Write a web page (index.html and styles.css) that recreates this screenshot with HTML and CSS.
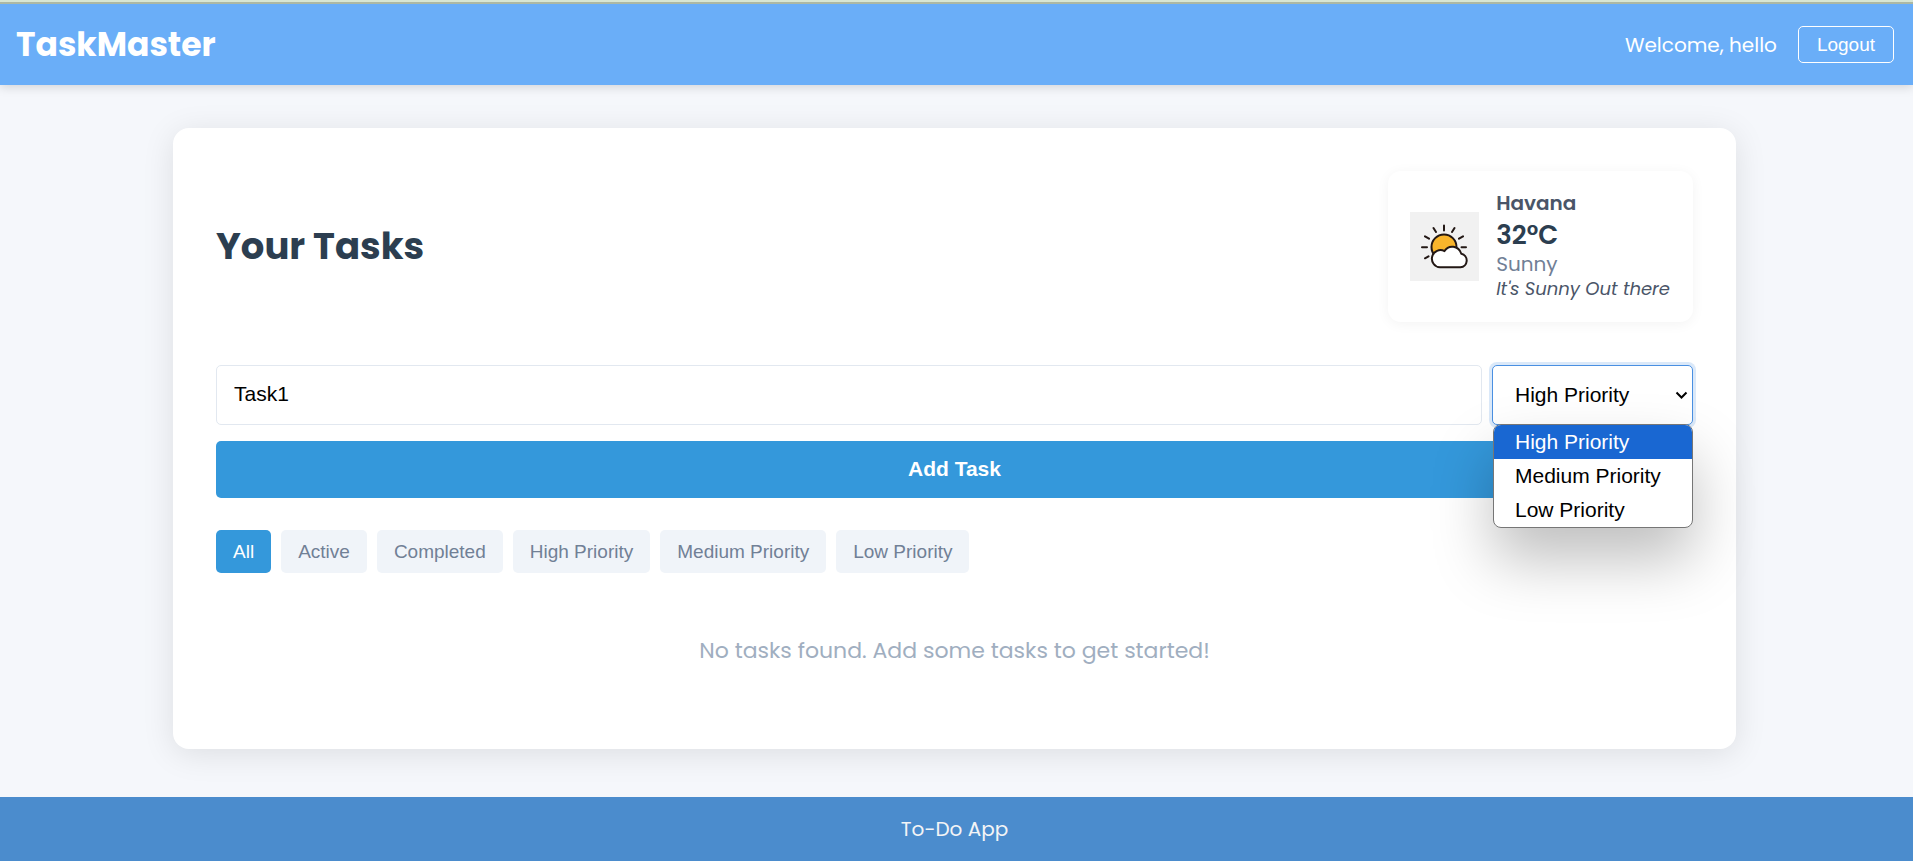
FILE: index.html
```html
<!DOCTYPE html>
<html lang="en">
<head>
<meta charset="utf-8">
<title>TaskMaster</title>
<meta name="viewport" content="width=device-width, initial-scale=1">
<link rel="stylesheet" href="styles.css">
</head>
<body>
<header class="navbar">
  <div class="brand">TaskMaster</div>
  <div class="user">
    <span class="welcome">Welcome, hello</span>
    <button class="logout" type="button">Logout</button>
  </div>
</header>

<main class="main">
  <section class="card">
    <div class="card-head">
      <h1 class="title">Your Tasks</h1>
      <div class="weather">
        <svg class="weather-icon" viewBox="0 0 69 69" role="img" aria-label="Partly sunny">
          <rect width="69" height="69" fill="#f1f1f1"/>
          <g stroke="#231815" stroke-width="2" stroke-linecap="round" stroke-linejoin="round">
            <path fill="none" d="M34 13.500v5M23.500 16l2.500 4M44.500 16l-2.500 4M15 24.300l4 2.400M53 24.300l-4 2.400M12 35.300h5M51.500 35.300h4.500M15 46.300l3.500-2"/>
            <circle cx="34" cy="35" r="12.500" fill="#f9b52c"/>
            <path fill="#fff" d="M30 55.300a8.600 8.600 0 1 1 4.500-16.200c4-6.600 14-5.800 16.800 2.600a6.900 6.900 0 0 1-.8 13.600z"/>
          </g>
        </svg>
        <div class="weather-info">
          <div class="city">Havana</div>
          <div class="temp">32°C</div>
          <div class="condition">Sunny</div>
          <div class="note">It's Sunny Out there</div>
        </div>
      </div>
    </div>

    <form class="task-form">
      <input class="task-input" type="text" aria-label="Task" value="Task1">
      <div class="priority">
        <select class="priority-select" aria-label="Priority">
          <option selected>High Priority</option>
          <option>Medium Priority</option>
          <option>Low Priority</option>
        </select>
        <svg class="chevron" viewBox="0 0 13 9" aria-hidden="true"><path d="M1.500 1.500l5 5 5-5" fill="none" stroke="#000" stroke-width="2"/></svg>
        <ul class="priority-menu" role="listbox" aria-label="Priority options">
          <li class="option option-active" role="option" aria-selected="true">High Priority</li>
          <li class="option" role="option" aria-selected="false">Medium Priority</li>
          <li class="option" role="option" aria-selected="false">Low Priority</li>
        </ul>
      </div>
      <button class="add-task" type="button">Add Task</button>
    </form>

    <div class="filters">
      <button class="filter filter-active" type="button">All</button>
      <button class="filter" type="button">Active</button>
      <button class="filter" type="button">Completed</button>
      <button class="filter" type="button">High Priority</button>
      <button class="filter" type="button">Medium Priority</button>
      <button class="filter" type="button">Low Priority</button>
    </div>

    <p class="empty">No tasks found. Add some tasks to get started!</p>
  </section>
</main>

<footer class="footer">To-Do App</footer>
</body>
</html>
```
FILE: styles.css
```css
* {
  box-sizing: border-box;
  margin: 0;
  padding: 0;
}

body {
  display: flex;
  flex-direction: column;
  min-height: 100vh;
  border-top: 2px solid #d8e6d3;
  background: #f5f7fb;
  color: #2c3e50;
  font-family: Poppins, Inter, sans-serif;
}

button,
input,
select,
.priority-menu {
  font-family: Arial, "Liberation Sans", sans-serif;
}

.navbar {
  display: flex;
  align-items: center;
  justify-content: space-between;
  height: 83px;
  padding: 0 19px 0 16px;
  border-top: 2px solid #acb8a4;
  background: #6aaef8;
  box-shadow: 0 2px 10px rgba(0, 0, 0, 0.15);
  color: #fff;
}

.brand {
  font-size: 33px;
  font-weight: 700;
}

.user {
  display: flex;
  align-items: center;
  gap: 21px;
}

.welcome {
  font-size: 20px;
}

.logout {
  padding: 6px 18px;
  border: 1px solid #fff;
  border-radius: 5px;
  background: transparent;
  color: #fff;
  font-size: 19px;
  line-height: 23px;
}

.main {
  flex: 1;
  padding: 43px 21px 48px 17px;
}

.card {
  max-width: 1563px;
  margin: 0 auto;
  padding: 43px;
  border-radius: 16px;
  background: #fff;
  box-shadow: 0 5px 32px rgba(0, 0, 0, 0.1);
}

.card-head {
  display: flex;
  align-items: center;
  justify-content: space-between;
  margin-bottom: 43px;
}

.title {
  padding-bottom: 2px;
  font-size: 37px;
  font-weight: 700;
}

.weather {
  display: flex;
  align-items: center;
  gap: 17px;
  padding: 21px 23px 21px 22px;
  border-radius: 13px;
  box-shadow: 0 2px 13px rgba(0, 0, 0, 0.05);
}

.weather-icon {
  width: 69px;
  height: 69px;
}

.city {
  margin-bottom: 2px;
  color: #4a5568;
  font-size: 20px;
  font-weight: 600;
  line-height: 22px;
}

.temp {
  font-size: 26px;
  font-weight: 600;
  line-height: 38px;
}

.condition {
  color: #718096;
  font-size: 20px;
  line-height: 20px;
}

.note {
  margin-top: 3px;
  color: #4a5568;
  font-size: 18px;
  font-style: italic;
  line-height: 24px;
}

.task-form {
  display: grid;
  grid-template-columns: 1fr auto;
  gap: 16px 10px;
  margin-bottom: 32px;
}

.task-input,
.priority-select {
  width: 100%;
  height: 60px;
  border: 1px solid #e2e8f0;
  border-radius: 5px;
  background: #fff;
  color: #000;
  font-size: 21px;
}

.task-input {
  padding: 0 17px 2px;
}

.priority {
  position: relative;
  width: 201px;
}

.priority-select {
  appearance: none;
  padding: 0 32px 1px 22px;
  border-color: #4a90e2;
  box-shadow: 0 0 0 3px rgba(74, 144, 226, 0.2);
}

.chevron {
  position: absolute;
  top: 26px;
  right: 5px;
  width: 13px;
  height: 9px;
  pointer-events: none;
}

.priority-menu {
  position: absolute;
  top: 59px;
  left: 1px;
  right: 0;
  z-index: 1;
  overflow: hidden;
  border: 1px solid #767676;
  border-radius: 8px;
  background: #fff;
  box-shadow: 0 32px 60px rgba(0, 0, 0, 0.25);
  color: #000;
  font-size: 21px;
  line-height: 34px;
  list-style: none;
}

.option {
  padding-left: 21px;
}

.option-active {
  background: #1967d2;
  color: #fff;
}

.add-task {
  grid-column: 1 / -1;
  height: 57px;
  padding-bottom: 2px;
  border: 0;
  border-radius: 5px;
  background: #3498db;
  color: #fff;
  font-size: 21px;
  font-weight: 700;
}

.filters {
  display: flex;
  flex-wrap: wrap;
  gap: 10px;
}

.filter {
  height: 43px;
  padding: 0 17px;
  border: 0;
  border-radius: 5px;
  background: #f0f4f9;
  color: #718096;
  font-size: 19px;
}

.filter-active {
  background: #3498db;
  color: #fff;
}

.empty {
  padding: 62px 0 39px;
  color: #a0aec0;
  font-size: 22px;
  line-height: 32px;
  text-align: center;
}

.footer {
  padding: 16px 21px 16px 17px;
  background: #4b8ccd;
  color: #f3f4f6;
  font-size: 20px;
  line-height: 32px;
  text-align: center;
}
```
